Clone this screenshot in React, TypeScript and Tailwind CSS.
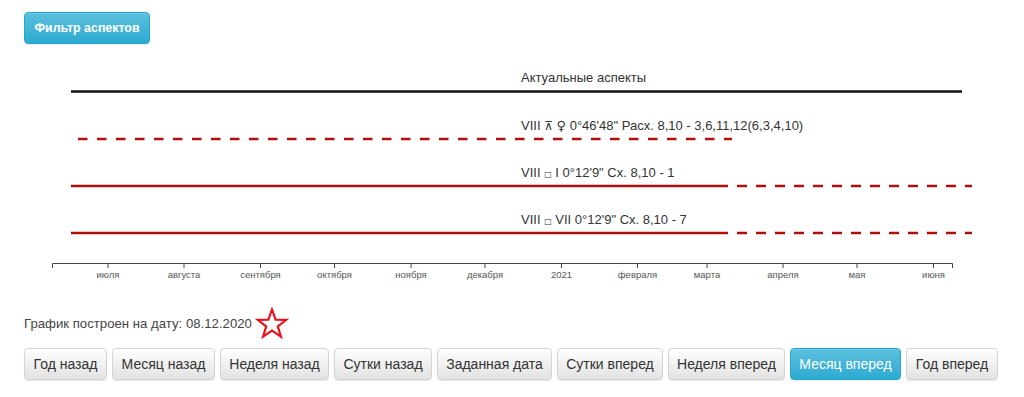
import React from 'react'

const months: { x: number; label: string }[] = [
  { x: 108, label: 'июля' },
  { x: 184, label: 'августа' },
  { x: 260.5, label: 'сентября' },
  { x: 334.5, label: 'октября' },
  { x: 411, label: 'ноября' },
  { x: 485, label: 'декабря' },
  { x: 561.5, label: '2021' },
  { x: 637.5, label: 'февраля' },
  { x: 707, label: 'марта' },
  { x: 783, label: 'апреля' },
  { x: 857, label: 'мая' },
  { x: 933.5, label: 'июня' },
]

const navButtons: { label: string; w: string; active?: boolean }[] = [
  { label: 'Год назад', w: 'w-[83px]' },
  { label: 'Месяц назад', w: 'w-[103px]' },
  { label: 'Неделя назад', w: 'w-[109px]' },
  { label: 'Сутки назад', w: 'w-[98px]' },
  { label: 'Заданная дата', w: 'w-[115px]' },
  { label: 'Сутки вперед', w: 'w-[106px]' },
  { label: 'Неделя вперед', w: 'w-[117px]' },
  { label: 'Месяц вперед', w: 'w-[111px]', active: true },
  { label: 'Год вперед', w: 'w-[92px]' },
]

const RED = '#b20d0d'

// Aspect timeline, drawn like the original d3 chart
const AspectChart: React.FC = () => {
  return (
    <svg width={1000} height={234} viewBox="0 0 1000 234" className="block">
      <g transform="translate(-24,-56)" fontFamily="'Liberation Sans', Arial, sans-serif">
        {/* title row */}
        <text x={521} y={82} fontSize={13} fill="#333">Актуальные аспекты</text>
        <line x1={71} y1={91.5} x2={962} y2={91.5} stroke="#111" strokeWidth={2.5} />

        {/* quincunx venus */}
        <text x={521} y={129.5} fontSize={13} fill="#333">
          VIII <tspan fontFamily="'DejaVu Sans', sans-serif" fontSize={12}>⊼</tspan>{' '}
          <tspan fontFamily="'DejaVu Sans', sans-serif" fontSize={13}>♀</tspan> 0°46'48" Расх. 8,10 - 3,6,11,12(6,3,4,10)
        </text>
        <line x1={78} y1={139} x2={732} y2={139} stroke={RED} strokeWidth={2.5} strokeDasharray="9.5 9.5" />

        {/* square I */}
        <text x={521} y={176.5} fontSize={13} fill="#333">
          VIII <tspan fontFamily="'DejaVu Sans', sans-serif" fontSize={8}>□</tspan> I 0°12'9" Сх. 8,10 - 1
        </text>
        <line x1={71} y1={186} x2={718} y2={186} stroke={RED} strokeWidth={2.5} />
        <line x1={718} y1={186} x2={972} y2={186} stroke={RED} strokeWidth={2.5} strokeDasharray="10 9" />

        {/* square VII */}
        <text x={521} y={223.5} fontSize={13} fill="#333">
          VIII <tspan fontFamily="'DejaVu Sans', sans-serif" fontSize={8}>□</tspan> VII 0°12'9" Сх. 8,10 - 7
        </text>
        <line x1={71} y1={233} x2={718} y2={233} stroke={RED} strokeWidth={2.5} />
        <line x1={718} y1={233} x2={972} y2={233} stroke={RED} strokeWidth={2.5} strokeDasharray="10 9" />

        {/* time axis */}
        <path d="M52.5,268V263.5H952.5V268" fill="none" stroke="#444" strokeWidth={1} />
        {months.map((m) => (
          <g key={m.label}>
            <line x1={m.x} y1={263.5} x2={m.x} y2={268} stroke="#444" strokeWidth={1} />
            <text x={m.x} y={278} fontSize={9.5} fill="#555" textAnchor="middle">
              {m.label}
            </text>
          </g>
        ))}
      </g>
    </svg>
  )
}

const Star: React.FC = () => (
  <svg width={34} height={34} viewBox="0 0 34 34" className="block">
    <polygon
      points="17,2.5 20.6,12.6 31.3,12.8 22.8,19.3 25.9,29.6 17,23.5 8.1,29.6 11.2,19.3 2.7,12.8 13.4,12.6"
      fill="none"
      stroke="#e8121d"
      strokeWidth={2.2}
      strokeLinejoin="miter"
    />
  </svg>
)

export default function App() {
  return (
    <div className="w-[1024px] h-[397px] bg-white pl-[24px] pt-[12px] font-['Liberation_Sans',Arial,sans-serif] text-[#333] overflow-hidden">
      <button className="h-[32px] w-[126px] rounded-[4px] border border-[#28a4c9] bg-gradient-to-b from-[#5bc0de] to-[#2aabd2] text-[12.4px] font-bold text-white shadow-[inset_0_1px_0_rgba(255,255,255,0.15),0_1px_1px_rgba(0,0,0,0.075)]">
        Фильтр аспектов
      </button>

      <div className="mt-[12px]">
        <AspectChart />
      </div>

      <div className="mt-[17px] flex items-center h-[34px]">
        <span className="text-[13.2px] text-[#444]">График построен на дату: 08.12.2020</span>
        <span className="ml-[3px]">
          <Star />
        </span>
      </div>

      <div className="mt-[7px] flex gap-[5px]">
        {navButtons.map((b) =>
          b.active ? (
            <button
              key={b.label}
              className={`${b.w} h-[32px] rounded-[4px] border border-[#28a4c9] bg-gradient-to-b from-[#5bc0de] to-[#2aabd2] text-[14px] text-white shadow-[inset_0_1px_0_rgba(255,255,255,0.15),0_1px_1px_rgba(0,0,0,0.075)]`}
            >
              {b.label}
            </button>
          ) : (
            <button
              key={b.label}
              className={`${b.w} h-[32px] rounded-[4px] border border-[#d4d4d4] bg-gradient-to-b from-[#ffffff] to-[#e2e2e2] text-[14px] text-[#333] shadow-[inset_0_1px_0_rgba(255,255,255,0.15),0_1px_1px_rgba(0,0,0,0.1)]`}
            >
              {b.label}
            </button>
          )
        )}
      </div>
    </div>
  )
}
